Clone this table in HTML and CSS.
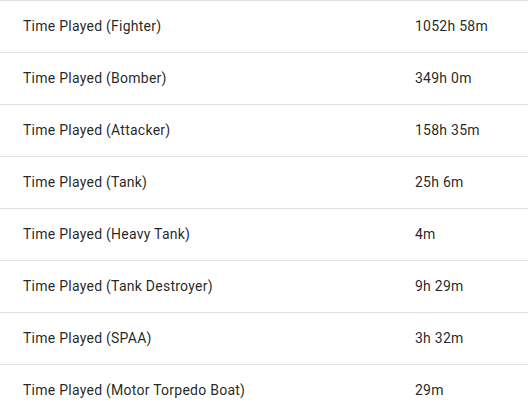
FILE: index.html
```html
<!DOCTYPE html>
<html>
<head>
<meta charset="utf-8">
<link rel="stylesheet" href="styles.css">
</head>
<body>
<table class="stats">
  <tbody>
    <tr><td class="label">Time Played (Fighter)</td><td class="value">1052h 58m</td></tr>
    <tr><td class="label">Time Played (Bomber)</td><td class="value">349h 0m</td></tr>
    <tr><td class="label">Time Played (Attacker)</td><td class="value">158h 35m</td></tr>
    <tr><td class="label">Time Played (Tank)</td><td class="value">25h 6m</td></tr>
    <tr><td class="label">Time Played (Heavy Tank)</td><td class="value">4m</td></tr>
    <tr><td class="label">Time Played (Tank Destroyer)</td><td class="value">9h 29m</td></tr>
    <tr><td class="label">Time Played (SPAA)</td><td class="value">3h 32m</td></tr>
    <tr><td class="label">Time Played (Motor Torpedo Boat)</td><td class="value">29m</td></tr>
  </tbody>
</table>
</body>
</html>
```
FILE: styles.css
```css
html, body {
  margin: 0;
  padding: 0;
  background: #fff;
}
body {
  font-family: Roboto, "Noto Sans", sans-serif;
  font-size: 14px;
  letter-spacing: 0.25px;
  color: rgba(0, 0, 0, 0.87);
}
.stats {
  width: 528px;
  border-collapse: collapse;
  border-spacing: 0;
}
.stats td {
  border-top: 1px solid #e0e0e0;
  height: 50px;
  padding: 0 0 1px 0;
  vertical-align: middle;
  line-height: 20px;
}
.stats td.label {
  padding-left: 23px;
  width: 392px;
}
.value {
  text-align: left;
}
```
